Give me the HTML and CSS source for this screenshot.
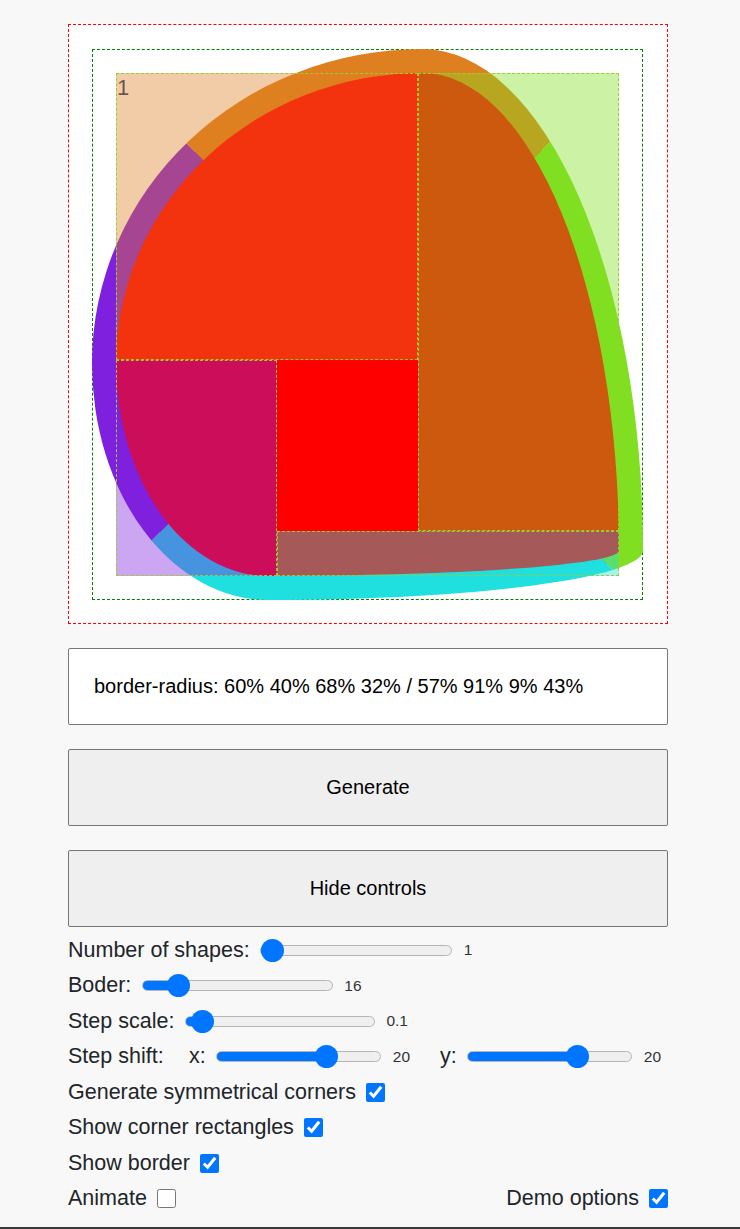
FILE: index.html
```html
<!DOCTYPE html>
<html lang="en">
<head>
<meta charset="utf-8">
<title>Fancy border radius</title>
<link rel="stylesheet" href="styles.css">
</head>
<body>
<main class="app">
  <section class="stage">
    <div class="frame">
      <div class="shape">
        <span class="corner corner-tl"></span>
        <span class="corner corner-tr"></span>
        <span class="corner corner-br"></span>
        <span class="corner corner-bl"></span>
        <span class="shape-num">1</span>
      </div>
    </div>
  </section>

  <div class="output">border-radius: 60% 40% 68% 32% / 57% 91% 9% 43%</div>

  <button class="btn" type="button">Generate</button>
  <button class="btn" type="button">Hide controls</button>

  <div class="controls">
    <div class="row">
      <span>Number of shapes:</span>
      <input class="range range-a" type="range" min="1" max="10" value="1" style="--f:0">
      <span class="val">1</span>
    </div>
    <div class="row">
      <span>Boder:</span>
      <input class="range range-b" type="range" min="0" max="110" value="16" style="--f:0.1455">
      <span class="val">16</span>
    </div>
    <div class="row">
      <span>Step scale:</span>
      <input class="range range-c" type="range" min="0" max="3" step="0.1" value="0.1" style="--f:0.0333">
      <span class="val">0.1</span>
    </div>
    <div class="row">
      <span>Step shift:</span>
      <span class="axis">x:</span>
      <input class="range range-d" type="range" min="-50" max="50" value="20" style="--f:0.7">
      <span class="val">20</span>
      <span class="axis axis-y">y:</span>
      <input class="range range-d" type="range" min="-50" max="50" value="20" style="--f:0.7">
      <span class="val">20</span>
    </div>
    <div class="row">
      <label class="opt">Generate symmetrical corners <input class="check" type="checkbox" checked></label>
    </div>
    <div class="row">
      <label class="opt">Show corner rectangles <input class="check" type="checkbox" checked></label>
    </div>
    <div class="row">
      <label class="opt">Show border <input class="check" type="checkbox" checked></label>
    </div>
    <div class="row row-split">
      <label class="opt">Animate <input class="check" type="checkbox"></label>
      <label class="opt">Demo options <input class="check" type="checkbox" checked></label>
    </div>
  </div>
</main>
<div class="rule"></div>
</body>
</html>
```

FILE: styles.css
```css
html, body {
  margin: 0;
  padding: 0;
  background: #f8f8f8;
  font-family: "Liberation Sans", Arial, sans-serif;
  color: #212529;
}

.app {
  width: 600px;
  margin: 24px 0 0 68px;
}

/* ---------- canvas ---------- */
.stage {
  box-sizing: border-box;
  width: 600px;
  height: 600px;
  border: 1px dashed #ff0000;
  background: #ffffff;
  padding: 24px 24px 23px 23px;
}

.frame {
  position: relative;
  width: 551px;
  height: 551px;
}

.frame::before {
  content: "";
  position: absolute;
  inset: 0;
  border: 1px dashed #008000;
}

.shape {
  position: relative;
  box-sizing: border-box;
  width: 100%;
  height: 100%;
  border: 24px solid;
  border-color: hsl(30, 75%, 50%) hsl(90, 75%, 50%) hsl(180, 75%, 50%) hsl(270, 75%, 50%);
  border-radius: 60% 40% 68% 32% / 57% 91% 9% 43%;
  background: #ff0000;
}

.corner {
  position: absolute;
  box-sizing: border-box;
  border: 1px dashed #9acd32;
}

.corner-tl {
  left: 0;
  top: 0;
  width: 60%;
  height: 57%;
  background: hsla(30, 75%, 50%, 0.4);
}

.corner-tr {
  right: 0;
  top: 0;
  width: 40%;
  height: 91%;
  background: hsla(90, 75%, 50%, 0.4);
}

.corner-br {
  right: 0;
  bottom: 0;
  width: 68%;
  height: 9%;
  background: hsla(180, 75%, 50%, 0.4);
}

.corner-bl {
  left: 0;
  bottom: 0;
  width: 32%;
  height: 43%;
  background: hsla(270, 75%, 50%, 0.4);
}

.shape-num {
  position: absolute;
  left: 1px;
  top: 2px;
  font-size: 22px;
  line-height: 1.15;
  color: rgba(30, 20, 45, 0.68);
}

/* ---------- output + buttons ---------- */
.output {
  box-sizing: border-box;
  height: 77px;
  margin-top: 24px;
  padding-left: 25px;
  display: flex;
  align-items: center;
  background: #ffffff;
  border: 1px solid #767676;
  border-radius: 2px;
  font-size: 20px;
  color: #000000;
}

.btn {
  display: block;
  box-sizing: border-box;
  width: 100%;
  height: 77px;
  margin: 24px 0 0;
  padding: 0;
  background: #efefef;
  border: 1px solid #767676;
  border-radius: 2px;
  font-family: "Liberation Sans", Arial, sans-serif;
  font-size: 20px;
  color: #000000;
}

/* ---------- controls ---------- */
.controls {
  margin-top: 5.5px;
}

.row {
  display: flex;
  align-items: center;
  height: 35.5px;
  font-size: 21.5px;
  white-space: nowrap;
}

.row-split {
  justify-content: space-between;
}

.opt {
  display: flex;
  align-items: center;
}

.axis {
  margin-left: 25.5px;
}

.axis-y {
  margin-left: 30px;
}

.val {
  margin-left: 11.5px;
  font-size: 15.5px;
  color: #333333;
}

.range {
  -webkit-appearance: none;
  appearance: none;
  height: 23px;
  margin: 0 0 0 10.5px;
  padding: 0;
  background: transparent;
}

.range-a { width: 192px; }
.range-b { width: 191px; }
.range-c { width: 190px; }
.range-d { width: 165px; }

.range::-webkit-slider-runnable-track {
  box-sizing: border-box;
  height: 11px;
  border: 1px solid #b5b5b5;
  border-radius: 6px;
  background: linear-gradient(to right, #0075ff 0 calc(var(--f) * (100% - 23px) + 11.5px), #efefef 0);
}

.range::-webkit-slider-thumb {
  -webkit-appearance: none;
  appearance: none;
  width: 23px;
  height: 23px;
  margin-top: -7px;
  border: 0;
  border-radius: 50%;
  background: #0075ff;
}

.check {
  width: 19px;
  height: 19px;
  margin: 0 0 0 10px;
}

.rule {
  margin-top: 10.5px;
  height: 2px;
  background: #3a3a3a;
}
```
